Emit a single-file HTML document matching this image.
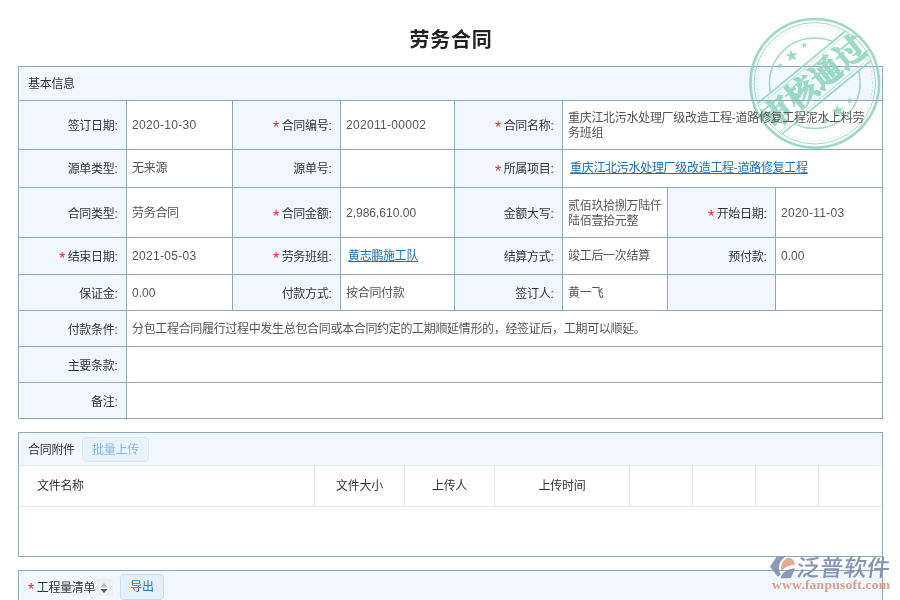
<!DOCTYPE html>
<html lang="zh-CN">
<head>
<meta charset="utf-8">
<title>劳务合同</title>
<style>
html,body{margin:0;padding:0;}
body{width:900px;height:600px;overflow:hidden;background:#fff;position:relative;
font-family:"Liberation Sans","Noto Sans CJK SC",sans-serif;font-size:12px;letter-spacing:-0.3px;color:#333;}
.abs{position:absolute;}
.title{position:absolute;left:1px;top:26px;width:900px;text-align:center;font-size:20px;font-weight:bold;color:#222;line-height:28px;letter-spacing:0.7px;}
.panel{position:absolute;box-sizing:border-box;border:1px solid #8eaaba;background:#fff;}
.hl{position:absolute;height:1px;background:#8eaaba;}
.vl{position:absolute;width:1px;background:#8eaaba;}
.lbg{position:absolute;background:#f0f7ff;}
.lab{position:absolute;display:flex;align-items:center;justify-content:flex-end;box-sizing:border-box;padding-right:8.5px;padding-bottom:2px;color:#333;white-space:nowrap;}
.val{position:absolute;display:flex;align-items:center;box-sizing:border-box;padding-left:5px;color:#555;line-height:15px;}
.val.pr{padding-right:10px;}
.val.nw{white-space:nowrap;}
.val.two{padding-top:2px;}
.num{letter-spacing:0.3px;}
.num0{letter-spacing:0;}
.req{color:#e02828;margin-right:2.5px;font-family:"Liberation Sans",sans-serif;font-size:16px;line-height:12px;position:relative;top:4px;letter-spacing:0;}
a.lk{color:#1b6fb3;text-decoration:underline;margin-left:2px;}
.hd{position:absolute;display:flex;align-items:center;box-sizing:border-box;padding-bottom:3px;color:#333;white-space:nowrap;}
.btn{position:absolute;box-sizing:border-box;border:1px solid #d9e9f7;background:#e8f2fc;border-radius:4px;text-align:center;color:#8bbbe3;}
.th{position:absolute;display:flex;align-items:center;justify-content:center;box-sizing:border-box;padding-bottom:3px;color:#333;}
.gl{position:absolute;background:#e6e6e6;}
</style>
</head>
<body>
<div id="page" style="position:absolute;left:0;top:0;width:900px;height:600px;overflow:hidden;will-change:transform;">

<div class="title">劳务合同</div>
<div class="panel" style="left:18px;top:66px;width:865px;height:353px;"></div>
<div class="lbg" style="left:19px;top:67px;width:863px;height:33px;"></div>
<div class="lbg" style="left:19px;top:101px;width:107px;height:48px;"></div>
<div class="lbg" style="left:233px;top:101px;width:107px;height:48px;"></div>
<div class="lbg" style="left:455px;top:101px;width:107px;height:48px;"></div>
<div class="lbg" style="left:19px;top:150px;width:107px;height:37px;"></div>
<div class="lbg" style="left:233px;top:150px;width:107px;height:37px;"></div>
<div class="lbg" style="left:455px;top:150px;width:107px;height:37px;"></div>
<div class="lbg" style="left:19px;top:188px;width:107px;height:49px;"></div>
<div class="lbg" style="left:233px;top:188px;width:107px;height:49px;"></div>
<div class="lbg" style="left:455px;top:188px;width:107px;height:49px;"></div>
<div class="lbg" style="left:668px;top:188px;width:107px;height:49px;"></div>
<div class="lbg" style="left:19px;top:238px;width:107px;height:36px;"></div>
<div class="lbg" style="left:233px;top:238px;width:107px;height:36px;"></div>
<div class="lbg" style="left:455px;top:238px;width:107px;height:36px;"></div>
<div class="lbg" style="left:668px;top:238px;width:107px;height:36px;"></div>
<div class="lbg" style="left:19px;top:275px;width:107px;height:35px;"></div>
<div class="lbg" style="left:233px;top:275px;width:107px;height:35px;"></div>
<div class="lbg" style="left:455px;top:275px;width:107px;height:35px;"></div>
<div class="lbg" style="left:668px;top:275px;width:107px;height:35px;"></div>
<div class="lbg" style="left:19px;top:311px;width:107px;height:35px;"></div>
<div class="lbg" style="left:19px;top:347px;width:107px;height:35px;"></div>
<div class="lbg" style="left:19px;top:383px;width:107px;height:35px;"></div>
<div class="panel" style="left:18px;top:432px;width:865px;height:125px;"></div>
<div class="lbg" style="left:19px;top:433px;width:863px;height:33px;"></div>
<div class="panel" style="left:18px;top:570px;width:865px;height:60px;border-bottom:none;background:#f0f7ff;"></div>
<svg class="abs" style="left:745px;top:10px;" width="150" height="150" viewBox="0 0 150 150">
<defs><mask id="bandmask"><rect x="0" y="0" width="150" height="150" fill="#fff"/><rect x="-75" y="-20.8" width="150" height="39.0" fill="#000" transform="translate(69.8 73.3) rotate(-39.5)"/></mask></defs>
<g opacity="0.85">
<g fill="none" stroke="#8dd3bd">
<circle cx="69.8" cy="73.3" r="64.3" stroke-width="2.6"/>
<circle cx="69.8" cy="73.3" r="60.7" stroke-width="1"/>
<circle cx="69.8" cy="73.3" r="57.8" stroke-width="1" stroke-dasharray="0.9 2.6"/>
<circle cx="69.8" cy="73.3" r="45.3" stroke-width="1.5" mask="url(#bandmask)"/>
</g>
<g fill="#8dd3bd">
<polygon points="45.6,39.3 47.8,43.4 52.4,42.6 49.3,46.1 51.4,50.2 47.2,48.3 43.9,51.5 44.4,46.9 40.3,44.8 44.8,43.9"/>
<polygon points="91.8,94.5 94.0,98.6 98.6,97.8 95.5,101.3 97.6,105.4 93.4,103.5 90.1,106.7 90.6,102.1 86.5,100.0 91.0,99.1"/>
<polygon points="58.7,31.7 59.9,33.9 62.5,33.5 60.7,35.4 61.9,37.7 59.6,36.6 57.7,38.4 58.0,35.9 55.7,34.7 58.3,34.2"/>
<polygon points="79.7,107.9 80.9,110.1 83.5,109.7 81.7,111.6 82.9,113.9 80.6,112.8 78.7,114.6 79.0,112.1 76.7,110.9 79.3,110.4"/>
<polygon points="34.4,52.3 35.6,54.5 38.2,54.1 36.4,56.0 37.6,58.3 35.3,57.2 33.4,59.0 33.7,56.5 31.4,55.3 34.0,54.8"/>
<polygon points="104.0,87.3 105.2,89.5 107.8,89.1 106.0,91.0 107.2,93.3 104.9,92.2 103.0,94.0 103.3,91.5 101.0,90.3 103.6,89.8"/>
</g>
<g transform="translate(69.8 73.3) rotate(-39.5)">
<g stroke="#8dd3bd" fill="none">
<line x1="-57.0" y1="-20.8" x2="57.0" y2="-20.8" stroke-width="1.8"/>
<line x1="-57.9" y1="18.2" x2="57.9" y2="18.2" stroke-width="1.8"/>
<line x1="-58.0" y1="-17.8" x2="58.0" y2="-17.8" stroke-width="0.7"/>
<line x1="-58.8" y1="15.2" x2="58.8" y2="15.2" stroke-width="0.7"/>
</g>
<text x="0" y="9.8" text-anchor="middle" font-family="'Liberation Serif','Noto Serif CJK SC',serif" font-weight="900" font-size="31" letter-spacing="0.5" fill="#8dd3bd" stroke="#8dd3bd" stroke-width="0.9">审核通过</text>
</g>
</g>
</svg>
<div class="hd" style="left:28px;top:67px;height:33px;">基本信息</div>
<div class="lab" style="left:19px;top:101px;width:107px;height:48px;">签订日期:</div>
<div class="val num" style="left:127px;top:101px;width:105px;height:48px;"><span>2020-10-30</span></div>
<div class="lab" style="left:233px;top:101px;width:107px;height:48px;"><span class="req">*</span>合同编号:</div>
<div class="val num" style="left:341px;top:101px;width:113px;height:48px;"><span>202011-00002</span></div>
<div class="lab" style="left:455px;top:101px;width:107px;height:48px;"><span class="req">*</span>合同名称:</div>
<div class="val two pr" style="left:563px;top:101px;width:319px;height:48px;"><span>重庆江北污水处理厂级改造工程-道路修复工程泥水上料劳务班组</span></div>
<div class="lab" style="left:19px;top:150px;width:107px;height:37px;">源单类型:</div>
<div class="val" style="left:127px;top:150px;width:105px;height:37px;"><span>无来源</span></div>
<div class="lab" style="left:233px;top:150px;width:107px;height:37px;">源单号:</div>
<div class="val" style="left:341px;top:150px;width:113px;height:37px;"><span></span></div>
<div class="lab" style="left:455px;top:150px;width:107px;height:37px;"><span class="req">*</span>所属项目:</div>
<div class="val" style="left:563px;top:150px;width:319px;height:37px;"><span><a class="lk">重庆江北污水处理厂级改造工程-道路修复工程</a></span></div>
<div class="lab" style="left:19px;top:189px;width:107px;height:49px;">合同类型:</div>
<div class="val" style="left:127px;top:189px;width:105px;height:49px;"><span>劳务合同</span></div>
<div class="lab" style="left:233px;top:189px;width:107px;height:49px;"><span class="req">*</span>合同金额:</div>
<div class="val num0" style="left:341px;top:189px;width:113px;height:49px;"><span>2,986,610.00</span></div>
<div class="lab" style="left:455px;top:189px;width:107px;height:49px;">金额大写:</div>
<div class="val two nw" style="left:563px;top:188px;width:104px;height:49px;"><span>贰佰玖拾捌万陆仟<br>陆佰壹拾元整</span></div>
<div class="lab" style="left:668px;top:189px;width:107px;height:49px;"><span class="req">*</span>开始日期:</div>
<div class="val num" style="left:776px;top:189px;width:106px;height:49px;"><span>2020-11-03</span></div>
<div class="lab" style="left:19px;top:238px;width:107px;height:36px;"><span class="req">*</span>结束日期:</div>
<div class="val num" style="left:127px;top:238px;width:105px;height:36px;"><span>2021-05-03</span></div>
<div class="lab" style="left:233px;top:238px;width:107px;height:36px;"><span class="req">*</span>劳务班组:</div>
<div class="val" style="left:341px;top:238px;width:113px;height:36px;"><span><a class="lk">黄志鹏施工队</a></span></div>
<div class="lab" style="left:455px;top:238px;width:107px;height:36px;">结算方式:</div>
<div class="val" style="left:563px;top:238px;width:104px;height:36px;"><span>竣工后一次结算</span></div>
<div class="lab" style="left:668px;top:238px;width:107px;height:36px;">预付款:</div>
<div class="val num0" style="left:776px;top:238px;width:106px;height:36px;"><span>0.00</span></div>
<div class="lab" style="left:19px;top:276px;width:107px;height:35px;">保证金:</div>
<div class="val num0" style="left:127px;top:276px;width:105px;height:35px;"><span>0.00</span></div>
<div class="lab" style="left:233px;top:276px;width:107px;height:35px;">付款方式:</div>
<div class="val" style="left:341px;top:276px;width:113px;height:35px;"><span>按合同付款</span></div>
<div class="lab" style="left:455px;top:276px;width:107px;height:35px;">签订人:</div>
<div class="val" style="left:563px;top:276px;width:104px;height:35px;"><span>黄一飞</span></div>
<div class="lab" style="left:19px;top:312px;width:107px;height:35px;">付款条件:</div>
<div class="val" style="left:127px;top:312px;width:755px;height:35px;"><span><span style="letter-spacing:-0.33px">分包工程合同履行过程中发生总包合同或本合同约定的工期顺延情形的，经签证后，工期可以顺延。</span></span></div>
<div class="lab" style="left:19px;top:348px;width:107px;height:35px;">主要条款:</div>
<div class="lab" style="left:19px;top:384px;width:107px;height:35px;">备注:</div>
<div class="hl" style="left:18px;top:100px;width:865px;"></div>
<div class="hl" style="left:18px;top:149px;width:865px;"></div>
<div class="hl" style="left:18px;top:187px;width:865px;"></div>
<div class="hl" style="left:18px;top:237px;width:865px;"></div>
<div class="hl" style="left:18px;top:274px;width:865px;"></div>
<div class="hl" style="left:18px;top:310px;width:865px;"></div>
<div class="hl" style="left:18px;top:346px;width:865px;"></div>
<div class="hl" style="left:18px;top:382px;width:865px;"></div>
<div class="vl" style="left:126px;top:100px;height:319px;"></div>
<div class="vl" style="left:232px;top:100px;height:211px;"></div>
<div class="vl" style="left:340px;top:100px;height:211px;"></div>
<div class="vl" style="left:454px;top:100px;height:211px;"></div>
<div class="vl" style="left:562px;top:100px;height:211px;"></div>
<div class="vl" style="left:667px;top:187px;height:124px;"></div>
<div class="vl" style="left:775px;top:187px;height:124px;"></div>
<div class="hd" style="left:28px;top:433px;height:33px;">合同附件</div>
<div class="btn" style="left:82px;top:437px;width:67px;height:25px;line-height:24px;color:#86bbe6;">批量上传</div>
<div class="gl" style="left:19px;top:506px;width:863px;height:1px;"></div>
<div class="gl" style="left:19px;top:465px;width:863px;height:1px;background:#e3eaf1;"></div>
<div class="gl" style="left:314px;top:466px;width:1px;height:41px;"></div>
<div class="gl" style="left:404px;top:466px;width:1px;height:41px;"></div>
<div class="gl" style="left:494px;top:466px;width:1px;height:41px;"></div>
<div class="gl" style="left:629px;top:466px;width:1px;height:41px;"></div>
<div class="gl" style="left:692px;top:466px;width:1px;height:41px;"></div>
<div class="gl" style="left:755px;top:466px;width:1px;height:41px;"></div>
<div class="gl" style="left:818px;top:466px;width:1px;height:41px;"></div>
<div class="th" style="left:37px;top:466px;height:40px;justify-content:flex-start;">文件名称</div>
<div class="th" style="left:315px;top:466px;width:89px;height:40px;">文件大小</div>
<div class="th" style="left:405px;top:466px;width:89px;height:40px;">上传人</div>
<div class="th" style="left:495px;top:466px;width:134px;height:40px;">上传时间</div>
<div class="hd" style="left:28px;top:571px;height:33px;"><span class="req">*</span>工程量清单</div>
<div class="abs" style="left:96px;top:579px;width:17px;height:17px;background:#edf0f3;"></div>
<svg class="abs" style="left:98px;top:581px;" width="12" height="14" viewBox="0 0 12 14"><path d="M2.5 6 L6 2 L9.5 6 Z" fill="#b4b4b4"/><path d="M2.5 8 L6 12 L9.5 8 Z" fill="#555"/></svg>
<div class="btn" style="left:120px;top:574px;width:44px;height:26px;line-height:25px;color:#2277bb;border-color:#c6ddf1;background:#e4effa;">导出</div>
<svg class="abs" style="left:766px;top:552px;" width="34" height="30" viewBox="766 552 34 30">
<g opacity="0.9">
<path d="M770 566.7 L776.7 556.6 L785.6 556.6 C781.5 559.5 779.2 563 779 566.7 C779 570 779.8 573 780.8 575 L777.6 576.6 Z" fill="#7e8fb1"/>
<path d="M781 571 C780.6 563.5 784 558.2 788.6 557.8 C792 557.8 794.6 561 795 564.8 C789.5 565 784.5 567.5 781 571 Z" fill="#e2a283"/>
<path d="M780.5 578.2 L790.8 578.2 L795.2 568.2 C790 568.3 785.5 570.2 782.6 573.6 Z" fill="#7e8fb1"/>
</g></svg>
<div class="abs" style="left:795px;top:553px;width:100px;height:30px;line-height:30px;font-size:23px;font-weight:500;letter-spacing:0.4px;color:#7f8fb0;white-space:nowrap;transform:skewX(-7deg);transform-origin:0 100%;opacity:.95;">泛普软件</div>
<div class="abs" style="left:772px;top:576px;width:125px;height:18px;line-height:18px;font-family:'Liberation Serif',serif;font-weight:bold;font-size:13.5px;letter-spacing:0.25px;color:#df9f85;white-space:nowrap;">www.fanpusoft.com</div>
</div>
</body>
</html>
